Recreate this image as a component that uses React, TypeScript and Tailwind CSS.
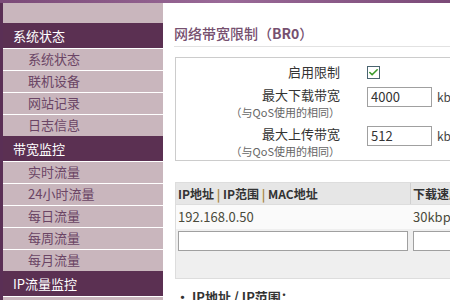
import { Check } from "lucide-react";

const menu = [
  { title: "系统状态", items: ["系统状态", "联机设备", "网站记录", "日志信息"] },
  { title: "带宽监控", items: ["实时流量", "24小时流量", "每日流量", "每周流量", "每月流量"] },
  { title: "IP流量监控", items: [] as string[] },
];

const font = { fontFamily: '"Noto Sans CJK SC", "Noto Sans", sans-serif' };

const Sidebar = () => (
  <div className="w-[163px] shrink-0 border-l-[3px] border-[#5a2f55] bg-[#c9b6bd] flex flex-col overflow-hidden">
    <div className="h-[20px] shrink-0 bg-[#c9b6bd]" />
    {menu.map((group) => (
      <div key={group.title} className="flex flex-col shrink-0">
        <div className="h-[25px] shrink-0 bg-[#5b3052] text-white text-[13px] leading-[25px] pl-[10px]">
          {group.title}
        </div>
        {group.items.map((item) => (
          <div
            key={item}
            className="h-[22px] shrink-0 border-t border-white bg-[#c9b6bd] text-[#6b4565] text-[13px] leading-[20px] pl-[25px]"
          >
            {item}
          </div>
        ))}
      </div>
    ))}
    <div className="h-[22px] shrink-0 border-t border-white bg-[#c9b6bd]" />
  </div>
);

const Main = () => (
  <div className="flex-1 bg-white pl-[11px] pt-[20px] overflow-hidden">
    <div className="h-[24px] border-b border-[#e2e2e2] text-[14px] leading-[20px] font-medium text-[#76506f] whitespace-nowrap">
      网络带宽限制（<span className="font-bold">BR0</span>）
    </div>

    <div className="mt-[10px] ml-[1px] w-[300px] border border-[#cccccc] pt-[3px] pb-[2px]">
      <div className="flex h-[22px] items-center">
        <div className="w-[164px] text-right text-[13px] text-[#333]">启用限制</div>
        <div className="ml-[27px] w-[13px] h-[13px] border border-[#4a6470] bg-white flex items-center justify-center">
          <Check size={11} strokeWidth={3.5} className="text-[#3a9a2a]" />
        </div>
      </div>

      {[
        { label: "最大下载带宽", value: "4000" },
        { label: "最大上传带宽", value: "512" },
      ].map((row, i) => (
        <div key={row.label} className={`flex ${i === 0 ? "mt-[2px]" : "mt-[5px]"}`}>
          <div className="w-[164px] flex flex-col items-end">
            <div className="h-[20px] text-[13px] leading-[20px] text-[#333]">{row.label}</div>
            <div className="h-[14px] text-[11px] leading-[14px] text-[#666] whitespace-nowrap">（与QoS使用的相同）</div>
          </div>
          <div className="ml-[27px] mt-[2px] flex items-start">
            <div className="w-[65px] h-[20px] border border-[#a0a0a0] text-[13px] leading-[18px] pl-[3px] text-[#333]">
              {row.value}
            </div>
            <div className="ml-[5px] text-[12px] leading-[20px] text-[#444] whitespace-nowrap">kbit/s</div>
          </div>
        </div>
      ))}
    </div>

    <div className="mt-[21px] ml-[1px] w-[330px] border border-[#dddddd] bg-[#efefef]">
      <div className="flex h-[22px] bg-[#e6e6e6] border-b border-[#dddddd] text-[12px] leading-[21px] font-bold text-[#333] whitespace-nowrap">
        <div className="w-[235px] pl-[2px] border-r border-[#d0d0d0]">
          IP地址 <span className="text-[#a8843f]">|</span> IP范围 <span className="text-[#a8843f]">|</span> MAC地址
        </div>
        <div className="pl-[2px]">下载速度</div>
      </div>
      <div className="flex h-[24px] bg-[#fafafa] text-[13px] leading-[23px] text-[#4a4a3a] whitespace-nowrap">
        <div className="w-[235px] pl-[2px]">192.168.0.50</div>
        <div className="pl-[2px]">30kbps</div>
      </div>
      <div className="flex h-[24px] items-center">
        <div className="ml-[2px] w-[230px] h-[20px] border border-[#a0a0a0] bg-white" />
        <div className="ml-[5px] w-[60px] h-[20px] border border-[#a0a0a0] bg-white" />
      </div>
      <div className="h-[25px]" />
    </div>

    <div className="mt-[8px] pl-[2px] text-[13px] font-bold text-[#333] whitespace-nowrap">
      • IP地址 / IP范围：
    </div>
  </div>
);

export default function App() {
  return (
    <div className="w-[450px] h-[300px] overflow-hidden flex flex-col" style={font}>
      <div className="h-[3px] shrink-0 bg-gradient-to-r from-[#7b4a78] via-[#9a6a98] to-[#7b4a78]" />
      <div className="flex flex-1 overflow-hidden">
        <Sidebar />
        <Main />
      </div>
    </div>
  );
}
